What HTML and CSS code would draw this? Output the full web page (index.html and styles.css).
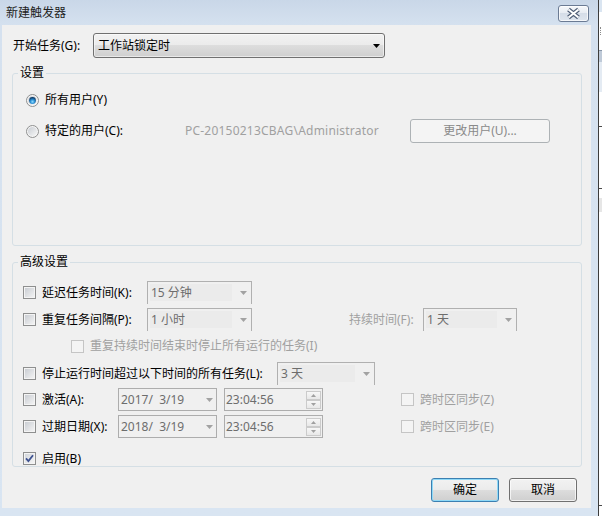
FILE: index.html
```html
<!DOCTYPE html>
<html lang="zh-CN">
<head>
<meta charset="utf-8">
<title>新建触发器</title>
<link rel="stylesheet" href="styles.css">
</head>
<body>
<div class="screen">
  <div class="window">
    <div class="titlebar">
      <span class="title">新建触发器</span>
      <div class="close">
        <svg width="29" height="15" viewBox="0 0 29 15"><path d="M9.5 3.5L19.5 11.5M19.5 3.5L9.5 11.5" stroke="#4f5e76" stroke-width="4.2" fill="none"/><path d="M9.5 3.5L19.5 11.5M19.5 3.5L9.5 11.5" stroke="#ffffff" stroke-width="2" fill="none"/></svg>
      </div>
    </div>
    <div class="client">
      <div class="start-row">
        <span class="start-label">开始任务(G):</span>
        <div class="select">
          <span>工作站锁定时</span>
          <svg width="7" height="4" viewBox="0 0 7 4"><path d="M0 0H7L3.5 4Z" fill="#000"/></svg>
        </div>
      </div>

      <fieldset class="group g1">
        <legend>设置</legend>
        <div class="g1-body">
          <div class="radio-row r1">
            <svg class="radio" width="13" height="13" viewBox="0 0 13 13">
              <defs>
                <linearGradient id="rg1" x1="0" y1="0" x2="1" y2="1"><stop offset="0" stop-color="#c9cdd3"/><stop offset="1" stop-color="#f7f7f7"/></linearGradient>
                <radialGradient id="rd1" cx="0.5" cy="0.68" r="0.62"><stop offset="0" stop-color="#8fdcff"/><stop offset="0.5" stop-color="#2b8fd4"/><stop offset="1" stop-color="#0d3a66"/></radialGradient>
              </defs>
              <circle cx="6.5" cy="6.5" r="6" fill="#f6f6f6" stroke="#8e8f8f"/>
              <circle cx="6.5" cy="6.5" r="4.6" fill="url(#rg1)"/>
              <circle cx="6.5" cy="6.5" r="3.4" fill="url(#rd1)"/>
            </svg>
            <span>所有用户(Y)</span>
          </div>
          <div class="radio-row r2">
            <svg class="radio" width="13" height="13" viewBox="0 0 13 13">
              <defs>
                <linearGradient id="rg2" x1="0" y1="0" x2="1" y2="1"><stop offset="0" stop-color="#c9cdd3"/><stop offset="1" stop-color="#f7f7f7"/></linearGradient>
              </defs>
              <circle cx="6.5" cy="6.5" r="6" fill="#f6f6f6" stroke="#8e8f8f"/>
              <circle cx="6.5" cy="6.5" r="4.6" fill="url(#rg2)"/>
            </svg>
            <span class="user-label">特定的用户(C):</span>
            <span class="user-path">PC-20150213CBAG\Administrator</span>
            <div class="btn-disabled">更改用户(U)...</div>
          </div>
        </div>
      </fieldset>

      <fieldset class="group g2">
        <legend>高级设置</legend>
        <div class="g2-body">
          <div class="row ra">
            <div class="chk w124"><span class="cb"></span><span>延迟任务时间(K):</span></div>
            <div class="combo w105"><span class="val">15 分钟</span><span class="arr"><svg width="7" height="4" viewBox="0 0 7 4"><path d="M0 0H7L3.5 4Z" fill="#a2a2a2"/></svg></span></div>
          </div>
          <div class="row rb">
            <div class="chk w124"><span class="cb"></span><span>重复任务间隔(P):</span></div>
            <div class="combo w105"><span class="val">1 小时</span><span class="arr"><svg width="7" height="4" viewBox="0 0 7 4"><path d="M0 0H7L3.5 4Z" fill="#a2a2a2"/></svg></span></div>
            <span class="dur-label">持续时间(F):</span>
            <div class="combo w94"><span class="val">1 天</span><span class="arr"><svg width="7" height="4" viewBox="0 0 7 4"><path d="M0 0H7L3.5 4Z" fill="#a2a2a2"/></svg></span></div>
          </div>
          <div class="row rc">
            <div class="chk dis"><span class="cb off"></span><span>重复持续时间结束时停止所有运行的任务(I)</span></div>
          </div>
          <div class="row rd">
            <div class="chk w254"><span class="cb"></span><span>停止运行时间超过以下时间的所有任务(L):</span></div>
            <div class="combo w98"><span class="val">3 天</span><span class="arr"><svg width="7" height="4" viewBox="0 0 7 4"><path d="M0 0H7L3.5 4Z" fill="#a2a2a2"/></svg></span></div>
          </div>
          <div class="row re">
            <div class="chk w95"><span class="cb"></span><span>激活(A):</span></div>
            <div class="date"><span class="val">2017/&nbsp; 3/19</span><svg width="7" height="4" viewBox="0 0 7 4"><path d="M0 0H7L3.5 4Z" fill="#a2a2a2"/></svg></div>
            <div class="time"><span class="val">23:04:56</span>
              <div class="spin">
                <span class="sp"><svg width="5" height="3" viewBox="0 0 5 3"><path d="M0 3H5L2.5 0Z" fill="#a0a0a0"/></svg></span>
                <span class="sp"><svg width="5" height="3" viewBox="0 0 5 3"><path d="M0 0H5L2.5 3Z" fill="#a0a0a0"/></svg></span>
              </div>
            </div>
            <div class="chk dis tz"><span class="cb off"></span><span>跨时区同步(Z)</span></div>
          </div>
          <div class="row rf">
            <div class="chk w95"><span class="cb"></span><span>过期日期(X):</span></div>
            <div class="date"><span class="val">2018/&nbsp; 3/19</span><svg width="7" height="4" viewBox="0 0 7 4"><path d="M0 0H7L3.5 4Z" fill="#a2a2a2"/></svg></div>
            <div class="time"><span class="val">23:04:56</span>
              <div class="spin">
                <span class="sp"><svg width="5" height="3" viewBox="0 0 5 3"><path d="M0 3H5L2.5 0Z" fill="#a0a0a0"/></svg></span>
                <span class="sp"><svg width="5" height="3" viewBox="0 0 5 3"><path d="M0 0H5L2.5 3Z" fill="#a0a0a0"/></svg></span>
              </div>
            </div>
            <div class="chk dis tz"><span class="cb off"></span><span>跨时区同步(E)</span></div>
          </div>
          <div class="row rg">
            <div class="chk"><span class="cb on"><svg width="11" height="11" viewBox="0 0 11 11"><path d="M2 5.3L4.4 8L9 2.2" stroke="#3e5290" stroke-width="1.8" fill="none"/></svg></span><span>启用(B)</span></div>
          </div>
        </div>
      </fieldset>

      <div class="actions">
        <div class="btn default">确定</div>
        <div class="btn">取消</div>
      </div>
    </div>
  </div>
  <div class="side">
    <div class="s-top"></div>
    <div class="s-white1"><span class="dots"></span></div>
    <div class="s-band"></div>
    <div class="s-light"></div>
    <div class="s-white2"></div>
    <div class="s-line"></div>
    <div class="s-white3"></div>
    <div class="s-line"></div>
    <div class="s-white4"></div>
    <div class="s-gray"></div>
    <div class="s-rest"></div>
  </div>
</div>
</body>
</html>
```

FILE: styles.css
```css
* { box-sizing: border-box; }
html, body { margin: 0; padding: 0; }
body {
  width: 602px;
  height: 516px;
  overflow: hidden;
  font-family: "Noto Sans", "Noto Sans CJK SC", sans-serif;
  font-size: 12px;
  line-height: 16px;
  color: #000;
  background: #fff;
}
.screen { display: flex; width: 602px; height: 516px; }

.window {
  width: 598px;
  height: 516px;
  display: flex;
  flex-direction: column;
  background: linear-gradient(#c9d7e8 0, #d5e1ef 25px, #d9e5f2 100%);
}
.titlebar {
  height: 25px;
  flex: none;
  display: flex;
  align-items: flex-start;
  justify-content: space-between;
  padding: 0 9px 0 6px;
}
.title { line-height: 25px; color: #222; }
.close {
  margin-top: 5px;
  width: 31px;
  height: 17px;
  border: 1px solid #6b7b94;
  border-radius: 3px;
  background: linear-gradient(#f6f8fb, #e6ebf2 50%, #d5dde8 50%, #dfe6ef);
  box-shadow: inset 0 0 0 1px rgba(255,255,255,0.7);
  display: flex;
  align-items: center;
  justify-content: center;
}

.client {
  margin-left: 2px;
  width: 589px;
  height: 483px;
  flex: none;
  background: #f0f0f0;
  padding-top: 8px;
  display: flex;
  flex-direction: column;
}

.start-row {
  margin-left: 11px;
  height: 25px;
  display: flex;
  align-items: center;
}
.start-label { width: 80px; }
.select {
  width: 292px;
  height: 25px;
  border: 1px solid #707070;
  border-radius: 3px;
  background: linear-gradient(#f2f2f2, #ebebeb 50%, #dddddd 50%, #cfcfcf);
  box-shadow: inset 0 0 0 1px rgba(255,255,255,0.55);
  display: flex;
  align-items: center;
  justify-content: space-between;
  padding: 0 4px 0 4px;
}

.group {
  margin: 0 0 0 10px;
  width: 570px;
  min-width: 0;
  border: 1px solid #d5dfe5;
  border-radius: 3px;
  padding: 0;
}
.group legend {
  margin-left: 5px;
  padding: 0 2px;
  line-height: 16px;
}
.g1 { margin-top: 7px; height: 181px; }
.g2 { margin-top: 8px; height: 213px; }

.g1-body {
  padding: 10px 0 0 13px;
  display: flex;
  flex-direction: column;
  gap: 10px;
}
.radio-row { display: flex; align-items: center; }
.r1 { height: 18px; }
.r2 { height: 24px; }
.radio { flex: none; margin-right: 6px; }
.user-label { width: 140px; }
.user-path { width: 225px; color: #a0a0a0; letter-spacing: 0.22px; }
.btn-disabled {
  width: 140px;
  height: 24px;
  border: 1px solid #adb2b5;
  border-radius: 3px;
  background: #f4f4f4;
  color: #8a8a8a;
  display: flex;
  align-items: center;
  justify-content: center;
}

.g2-body {
  padding: 11px 0 0 10px;
  display: flex;
  flex-direction: column;
}
.row { display: flex; align-items: center; }
.ra { height: 23px; }
.rb { height: 23px; margin-top: 4px; }
.rc { height: 16px; margin-top: 7px; padding-left: 48px; }
.rd { height: 23px; margin-top: 8px; }
.re { height: 23px; margin-top: 3px; }
.rf { height: 23px; margin-top: 4px; }
.rg { height: 13px; margin-top: 14px; }

.chk { display: flex; align-items: center; gap: 6px; flex: none; }
.chk.dis { color: #a0a0a0; }
.w124 { width: 124px; }
.w254 { width: 254px; }
.w95 { width: 95px; }

.cb {
  width: 13px;
  height: 13px;
  flex: none;
  border: 1px solid #8e8f8f;
  background: linear-gradient(135deg, #c6cad0, #f6f6f6);
  box-shadow: inset 0 0 0 1px #f4f4f4;
  display: flex;
  align-items: center;
  justify-content: center;
}
.cb.off {
  border-color: #c5c5c5;
  background: #f4f4f4;
  box-shadow: none;
}
.cb.on { background: linear-gradient(135deg, #cfd3d9, #f8f8f8); }

.combo {
  height: 23px;
  flex: none;
  border: 1px solid #b0b0b0;
  border-bottom: none;
  display: flex;
  align-items: stretch;
  padding: 2px 0 3px 2px;
  color: #6d6d6d;
}
.combo .val {
  flex: 1;
  background: #ebebeb;
  display: flex;
  align-items: center;
  padding-left: 1px;
}
.combo .arr {
  width: 19px;
  flex: none;
  display: flex;
  align-items: center;
  padding-left: 8px;
}
.w105 { width: 105px; }
.w94 { width: 94px; }
.w98 { width: 98px; }
.dur-label { margin-left: 97px; width: 74px; color: #a0a0a0; }

.date, .time {
  width: 99px;
  height: 23px;
  flex: none;
  border: 1px solid #adadad;
  display: flex;
  align-items: center;
  justify-content: space-between;
  color: #6d6d6d;
}
.date { padding: 0 3px 0 2px; }
.time { margin-left: 7px; padding: 0 1px 0 1px; }
.spin { display: flex; flex-direction: column; }
.sp {
  width: 15px;
  height: 9px;
  border: 1px solid #cbcbcb;
  background: linear-gradient(#f7f7f7, #e8e8e8);
  display: flex;
  align-items: center;
  justify-content: center;
}
.tz { margin-left: 78px; }

.actions {
  margin-top: 11px;
  padding-right: 14px;
  display: flex;
  justify-content: flex-end;
  gap: 10px;
}
.btn {
  width: 68px;
  height: 24px;
  border: 1px solid #707070;
  border-radius: 3px;
  background: linear-gradient(#f2f2f2, #ebebeb 50%, #dddddd 50%, #cfcfcf);
  box-shadow: inset 0 0 0 1px rgba(255,255,255,0.7);
  display: flex;
  align-items: center;
  justify-content: center;
}
.btn.default {
  border-color: #3c7fb1;
  box-shadow: inset 0 0 0 1px #8fd9f7;
}

.side {
  width: 4px;
  height: 516px;
  border-left: 1px solid #3c3c3c;
  display: flex;
  flex-direction: column;
  background: #ffffff;
}
.s-top { height: 12px; background: #dae5f1; }
.s-white1 { height: 38px; display: flex; align-items: center; }
.dots { width: 1px; height: 8px; margin-left: 1px; border-left: 1px dotted #8a8a8a; }
.s-band { height: 12px; background: #bfcad8; border-top: 1px solid #8896a8; }
.s-light { height: 30px; background: #e4ebf3; }
.s-white2 { height: 34px; }
.s-line { height: 1px; background: #4a4a4a; }
.s-white3 { height: 61px; }
.s-white4 { height: 9px; }
.s-gray { height: 14px; background: #e6e6e6; }
.s-rest { flex: 1; border-bottom: 1px solid #4a4a4a; margin-bottom: 10px; }
```
